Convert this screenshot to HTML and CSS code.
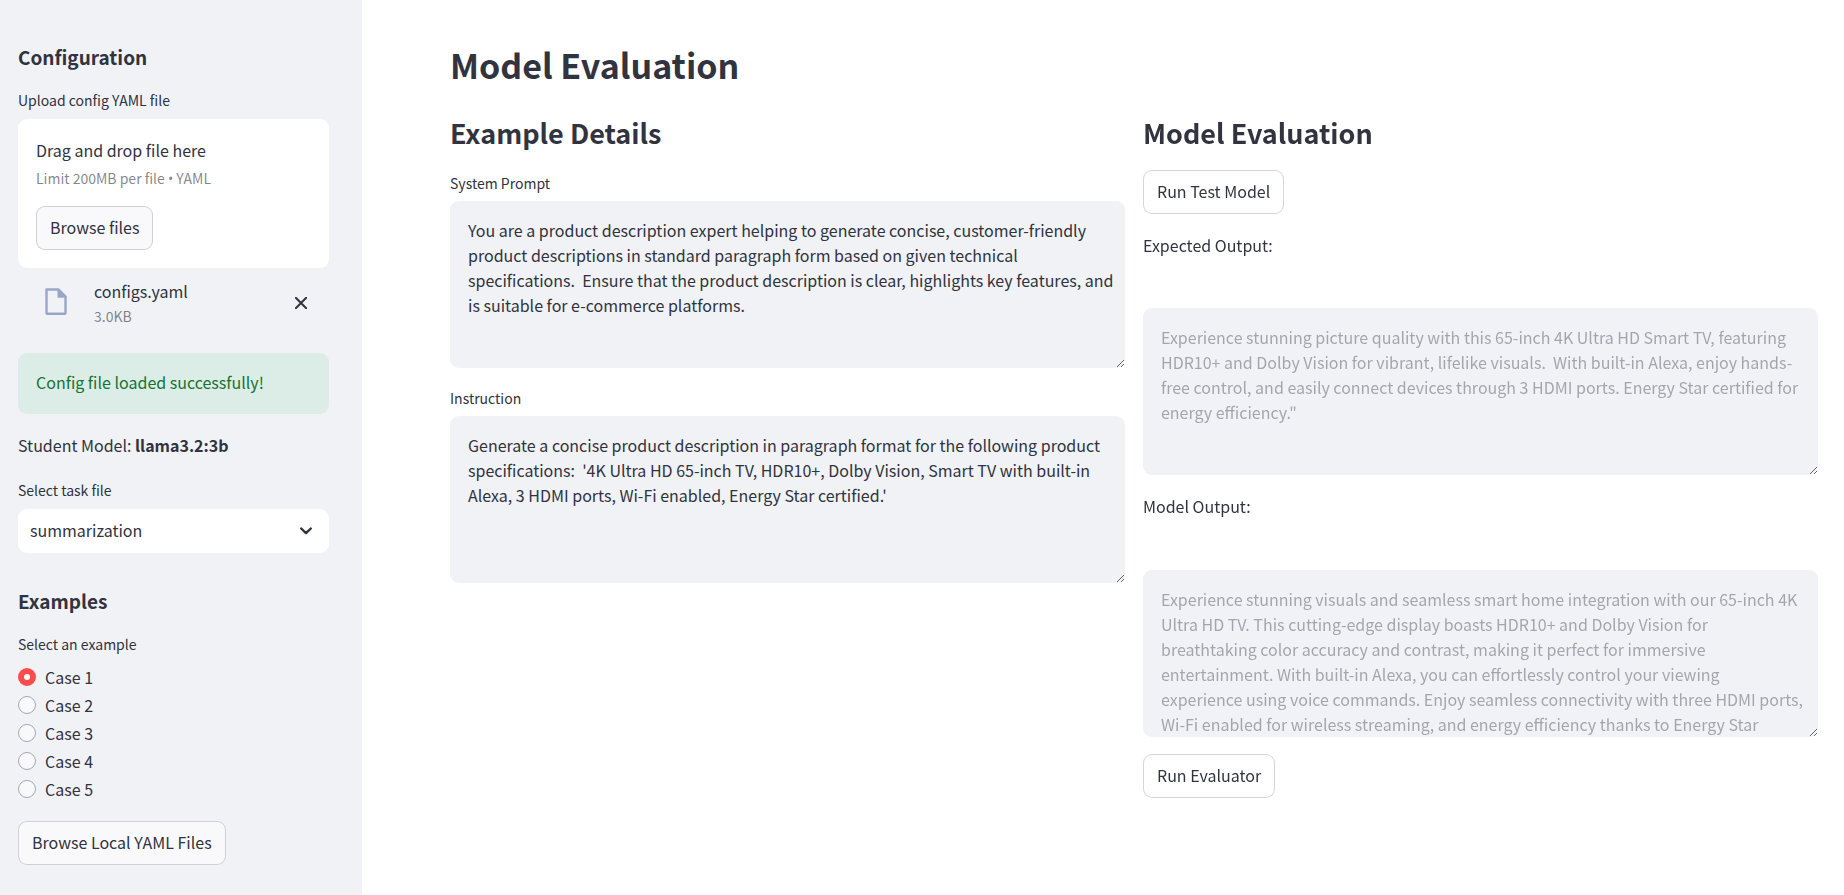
FILE: index.html
```html
<!DOCTYPE html>
<html lang="en">
<head>
<meta charset="utf-8">
<title>Model Evaluation</title>
<link rel="stylesheet" href="styles.css">
</head>
<body>
<div class="app">
  <aside class="sidebar">
    <h2 class="side-title">Configuration</h2>
    <label class="label" for="browse">Upload config YAML file</label>
    <section class="dropzone">
      <p class="drop-text">Drag and drop file here</p>
      <p class="small">Limit 200MB per file <span class="bullet">•</span> YAML</p>
      <button class="btn" id="browse" type="button">Browse files</button>
    </section>
    <div class="file">
      <svg class="file-icon" viewBox="0 0 22 27" aria-hidden="true"><path d="M1.500 1.500h12l7 7V25a.8.8 0 0 1-.8.8H2.300a.8.8 0 0 1-.8-.8z" fill="none" stroke="currentColor" stroke-width="2.400" stroke-linejoin="round"/><path d="M12.500 1h1.800L21.500 8.300v1.500h-9z" fill="currentColor"/></svg>
      <div class="file-info">
        <span class="file-name">configs.yaml</span>
        <span class="small">3.0KB</span>
      </div>
      <button class="remove" type="button" aria-label="Remove configs.yaml"><svg viewBox="0 0 12 12" aria-hidden="true"><path d="M.8.8l10.400 10.400M11.200.8L.8 11.200" stroke="currentColor" stroke-width="2" stroke-linecap="round"/></svg></button>
    </div>
    <div class="success" role="status">Config file loaded successfully!</div>
    <p class="student">Student Model: <strong>llama3.2:3b</strong></p>
    <label class="label" for="task">Select task file</label>
    <div class="select">
      <select id="task"><option>summarization</option></select>
      <svg class="chevron" viewBox="0 0 12 8" aria-hidden="true"><path d="M1.200 1.500L6 6.200l4.800-4.700" fill="none" stroke="currentColor" stroke-width="2.400" stroke-linecap="round" stroke-linejoin="round"/></svg>
    </div>
    <h2 class="side-title examples">Examples</h2>
    <fieldset class="cases">
      <legend class="label">Select an example</legend>
      <label class="case"><input type="radio" name="case" checked>Case 1</label>
      <label class="case"><input type="radio" name="case">Case 2</label>
      <label class="case"><input type="radio" name="case">Case 3</label>
      <label class="case"><input type="radio" name="case">Case 4</label>
      <label class="case"><input type="radio" name="case">Case 5</label>
    </fieldset>
    <button class="btn" type="button">Browse Local YAML Files</button>
  </aside>
  <main class="main">
    <h1 class="title">Model Evaluation</h1>
    <div class="columns">
      <section class="col">
        <h2 class="heading">Example Details</h2>
        <label class="label" for="system">System Prompt</label>
        <textarea class="area" id="system">You are a product description expert helping to generate concise, customer-friendly product descriptions in standard paragraph form based on given technical specifications.  Ensure that the product description is clear, highlights key features, and is suitable for e-commerce platforms.</textarea>
        <label class="label next" for="instruction">Instruction</label>
        <textarea class="area" id="instruction">Generate a concise product description in paragraph format for the following product specifications:  '4K Ultra HD 65-inch TV, HDR10+, Dolby Vision, Smart TV with built-in Alexa, 3 HDMI ports, Wi-Fi enabled, Energy Star certified.'</textarea>
      </section>
      <section class="col">
        <h2 class="heading">Model Evaluation</h2>
        <button class="btn" type="button">Run Test Model</button>
        <label class="output-label" for="expected">Expected Output:</label>
        <textarea class="area" id="expected" disabled>Experience stunning picture quality with this 65-inch 4K Ultra HD Smart TV, featuring HDR10+ and Dolby Vision for vibrant, lifelike visuals.  With built-in Alexa, enjoy hands-free control, and easily connect devices through 3 HDMI ports. Energy Star certified for energy efficiency."</textarea>
        <label class="output-label" for="output">Model Output:</label>
        <textarea class="area" id="output" disabled>Experience stunning visuals and seamless smart home integration with our 65-inch 4K Ultra HD TV. This cutting-edge display boasts HDR10+ and Dolby Vision for breathtaking color accuracy and contrast, making it perfect for immersive entertainment. With built-in Alexa, you can effortlessly control your viewing
experience using voice commands. Enjoy seamless connectivity with three HDMI ports, Wi-Fi enabled for wireless streaming, and energy efficiency thanks to Energy Star</textarea>
        <button class="btn run" type="button">Run Evaluator</button>
      </section>
    </div>
  </main>
</div>
</body>
</html>
```
FILE: styles.css
```css
* { box-sizing: border-box; }
body {
  margin: 0;
  color: #31333f;
  background: #fff;
  font: 16px/26px "Noto Sans CJK SC", "Noto Sans", sans-serif;
}
h1, h2, p { margin: 0; }
button, select, textarea { font: inherit; color: inherit; }
.app { display: flex; min-height: 100vh; }
.sidebar {
  flex: 0 0 362px;
  padding: 44px 33px 30px 18px;
  background: #f0f2f6;
}
.side-title { font-size: 19px; line-height: 26px; font-weight: 700; margin-bottom: 17px; }
.side-title.examples { margin-top: 35px; }
.label { display: block; font-size: 14px; line-height: 26px; margin-bottom: 6px; padding: 0; }
.main .label { margin-bottom: 5px; }
.dropzone { background: #fff; border-radius: 9px; padding: 18px; }
.drop-text { margin-bottom: 3px; }
.small { display: block; font-size: 14px; line-height: 24px; color: #31333f99; }
.bullet { font-family: "Open Sans", sans-serif; }
.btn {
  display: block;
  height: 44px;
  padding: 0 13px 2px;
  border: 1px solid #31333f33;
  border-radius: 9px;
  background: #fff;
}
.sidebar .btn { background: #f9f9fb; }
.dropzone .btn { margin-top: 15px; }
.file { display: flex; align-items: center; padding: 11px 22px 0 27px; }
.file-icon { width: 22px; height: 27px; color: #98a7c8; margin: 0 27px 4px 0; }
.file-info { flex: 1; }
.file-name { display: block; line-height: 25px; }
.remove { display: flex; padding: 0 0 2px; border: 0; background: none; }
.remove svg { width: 12px; height: 12px; }
.success { margin-top: 25px; padding: 17px 18px 19px; line-height: 25px; border-radius: 9px; background: #dbede6; color: #177233; }
.student { margin: 18px 0 19px; }
.student strong { font-weight: 700; }
.select { position: relative; }
.select select {
  width: 100%;
  height: 44px;
  padding: 0 36px 3px 12px;
  border: 0;
  border-radius: 9px;
  background: #fff;
  appearance: none;
}
.chevron { position: absolute; right: 17px; top: 18px; width: 12px; height: 8px; pointer-events: none; }
.cases { margin: 0 0 18px; padding: 0; border: 0; }
.case { display: flex; align-items: center; gap: 9px; height: 28px; padding-bottom: 1px; }
.case input {
  width: 18px;
  height: 18px;
  margin: 0;
  border: 1px solid #a3a8b4;
  border-radius: 50%;
  background: #f9f9fb;
  appearance: none;
}
.case input:checked { border: 6px solid #ff4b4b; background: #fff; }
.main { flex: 1; min-width: 0; padding: 36px 26px 36px 88px; }
.title { font-size: 34px; line-height: 58px; font-weight: 700; }
.columns { display: grid; grid-template-columns: 1fr 1fr; gap: 18px; margin-top: 16px; }
.heading { font-size: 27px; line-height: 46px; font-weight: 700; margin-bottom: 14px; }
.area {
  display: block;
  width: 100%;
  height: 167px;
  padding: 17px 11px 17px 18px;
  line-height: 25px;
  border: 0;
  border-radius: 9px;
  background: #f0f2f6;
  resize: vertical;
}
.area:disabled { color: #31333f66; }
.area::-webkit-scrollbar { width: 6px; height: 6px; background: transparent; }
.next { margin-top: 17px; }
.output-label { display: block; margin: 18px 0 50px; }
.area + .output-label { margin-bottom: 51px; }
.run { margin-top: 17px; }
```
